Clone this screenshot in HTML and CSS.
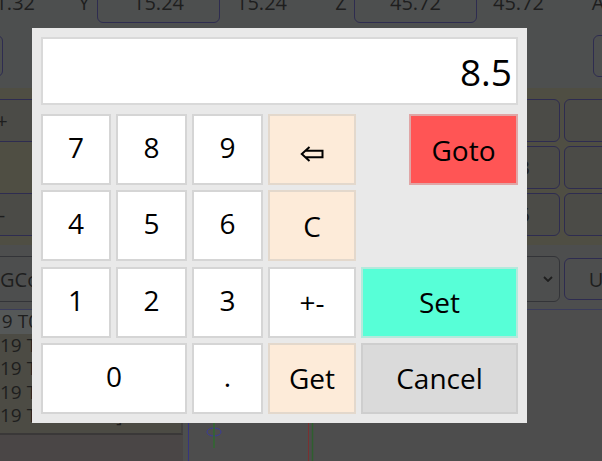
FILE: index.html
```html
<!DOCTYPE html>
<html lang="en">
<head>
<meta charset="utf-8">
<title>Keypad</title>
<link rel="stylesheet" href="styles.css">
</head>
<body>
<div class="app">
  <div class="axes">
    <span class="val lead">41.32</span>
    <span class="lbl">Y</span><span class="field">15.24</span><span class="val">15.24</span>
    <span class="lbl">Z</span><span class="field">45.72</span><span class="val">45.72</span>
    <span class="lbl">A</span>
  </div>
  <div class="row2">
    <span class="field edge-left"></span>
    <span class="field edge-right"></span>
  </div>
  <div class="jog">
    <div class="jog-left">
      <button class="jbtn">+</button>
      <span></span>
      <button class="jbtn">-</button>
    </div>
    <div class="jog-right">
      <button class="jbtn step">1</button><button class="jbtn"></button>
      <button class="jbtn step">3</button><button class="jbtn"></button>
      <button class="jbtn step">5</button><button class="jbtn"></button>
    </div>
  </div>
  <div class="toolbar">
    <div class="tsel tsel-left">GCode</div>
    <div class="tb-right">
      <div class="tsel tsel-right">
        <span>mm</span>
        <svg class="chev" width="10" height="6" viewBox="0 0 10 6"><path d="M1 1 L5 5 L9 1" fill="none" stroke="#1e1e1e" stroke-width="1.8"/></svg>
      </div>
      <button class="tbtn">Units</button>
    </div>
  </div>
  <div class="lower">
    <div class="listcol">
      <ul class="gcode">
        <li class="sel first">19 T0 [0 0 20]</li>
        <li>19 T0 [0 0 20]</li>
        <li>19 T0 [0 0 20]</li>
        <li>19 T0 [0 0 20]</li>
        <li>19 T0 : 0 0 20]</li>
      </ul>
      <div class="listfoot"></div>
    </div>
    <div class="view">
      <svg width="415" height="151" viewBox="0 0 415 151">
        <line x1="1.5" y1="0" x2="1.5" y2="151" stroke="#35357e" stroke-width="1"/>
        <line x1="121.5" y1="0" x2="121.5" y2="151" stroke="#7a3030" stroke-width="1"/>
        <line x1="125.5" y1="0" x2="125.5" y2="151" stroke="#2f5e2f" stroke-width="1.5"/>
        <ellipse cx="27" cy="122" rx="7" ry="4" fill="none" stroke="#3a3a9a" stroke-width="1"/>
        <line x1="27" y1="112" x2="27" y2="138" stroke="#2f6a2f" stroke-width="1.5"/>
      </svg>
    </div>
  </div>
</div>

<div class="keypad" role="dialog" aria-label="Numeric keypad">
  <div class="display">8.5</div>
  <div class="keys">
    <button class="key num">7</button>
    <button class="key num">8</button>
    <button class="key num">9</button>
    <button class="key act" aria-label="Backspace">
      <svg class="bksp" width="25" height="17" viewBox="0 0 25 17"><path d="M9.5 1 L1.8 8 L9.5 15 M5.3 4.8 H22.5 V11.2 H5.3" fill="none" stroke="#000" stroke-width="2" stroke-linejoin="miter"/></svg>
    </button>
    <button class="key goto">Goto</button>

    <button class="key num">4</button>
    <button class="key num">5</button>
    <button class="key num">6</button>
    <button class="key act">C</button>
    <div class="empty"></div>

    <button class="key num">1</button>
    <button class="key num">2</button>
    <button class="key num">3</button>
    <button class="key">+-</button>
    <button class="key set">Set</button>

    <button class="key num zero">0</button>
    <button class="key num">.</button>
    <button class="key act">Get</button>
    <button class="key cancel">Cancel</button>
  </div>
</div>
</body>
</html>
```
FILE: styles.css
```css
html, body {
  margin: 0;
  padding: 0;
}
body {
  width: 602px;
  height: 461px;
  overflow: hidden;
  background: #4d4f4f;
  font-family: "Open Sans", "Noto Sans", sans-serif;
  color: #1e1e1e;
}
button {
  font: inherit;
  color: inherit;
  margin: 0;
  padding: 0;
  cursor: pointer;
}

/* ---------- dimmed application behind the dialog ---------- */
.app {
  display: flex;
  flex-direction: column;
  width: 602px;
  height: 461px;
  overflow: hidden;
}
.axes {
  display: flex;
  align-items: center;
  height: 36px;
  margin: -13px 0 0 -37px;
  font-size: 20px;
  white-space: nowrap;
  flex: none;
}
.axes > span {
  box-sizing: border-box;
  height: 36px;
  display: flex;
  align-items: center;
  padding-bottom: 5px;
  flex: none;
}
.val {
  width: 108px;
  padding-left: 16px;
}
.val.lead {
  padding-left: 21px;
}
.lbl {
  width: 26px;
  justify-content: center;
}
.field {
  box-sizing: border-box;
  width: 123px;
  border: 1.5px solid #2e2c50;
  border-radius: 6px;
  justify-content: center;
}
.row2 {
  display: flex;
  justify-content: space-between;
  margin-top: 12px;
  height: 42px;
  flex: none;
}
.row2 .field {
  width: 60px;
  height: 42px;
}
.edge-left { margin-left: -57px; }
.edge-right { margin-right: -51px; }

.jog {
  display: flex;
  justify-content: space-between;
  margin-top: 11px;
  padding: 11px 0 9px;
  background: #4f4e43;
  flex: none;
}
.jog-left {
  display: grid;
  grid-template-rows: 43px 43px 43px;
  row-gap: 4px;
  width: 80px;
  margin-left: -38px;
}
.jog-right {
  display: grid;
  grid-template-columns: 76px 76px;
  grid-template-rows: 43px 43px 43px;
  gap: 4px;
  margin-right: -38px;
}
.jbtn {
  box-sizing: border-box;
  background: #4b4b47;
  border: 1.5px solid #2e2c50;
  border-radius: 6px;
  font-size: 20px;
  color: #1e1e1e;
}
.jbtn.step {
  display: flex;
  align-items: center;
  justify-content: flex-end;
  padding-right: 29px;
}
.toolbar {
  display: flex;
  justify-content: space-between;
  align-items: flex-start;
  height: 64px;
  border-bottom: 1px solid #3a3c5a;
  background: #4d4e4e;
  flex: none;
}
.tsel {
  box-sizing: border-box;
  height: 46px;
  margin-top: 11px;
  border: 1.5px solid #333438;
  border-radius: 6px;
  display: flex;
  align-items: center;
  font-size: 20px;
}
.tsel-left {
  width: 160px;
  margin-left: -9px;
  padding-left: 8px;
}
.tb-right {
  display: flex;
  gap: 4px;
  margin-right: -60px;
}
.tsel-right {
  width: 140px;
  justify-content: space-between;
  padding: 0 6px 0 12px;
}
.tbtn {
  box-sizing: border-box;
  width: 98px;
  height: 42px;
  margin-top: 13px;
  background: transparent;
  border: 1.5px solid #2e2c50;
  border-radius: 6px;
  font-size: 20px;
  text-align: center;
}
.lower {
  display: flex;
  flex: 1;
  min-height: 0;
}
.listcol {
  width: 183px;
  display: flex;
  flex-direction: column;
  flex: none;
}
.gcode {
  list-style: none;
  margin: 0;
  padding: 0;
  height: 125px;
  box-sizing: border-box;
  background: #4c4b44;
  border-bottom: 2px solid #3a3838;
  border-right: 2px solid #424040;
  font-size: 19px;
  overflow: hidden;
}
.gcode li {
  height: 23.5px;
  line-height: 23.5px;
  white-space: nowrap;
}
.gcode li.sel {
  background: #555858;
}
.gcode li.first {
  text-indent: -9px;
}
.listfoot {
  flex: 1;
  background: #4a4646;
}
.view {
  flex: 1;
  margin-left: 4px;
  background: #4d4d4d;
}
.view svg {
  display: block;
}

/* ---------- keypad dialog ---------- */
.keypad {
  position: fixed;
  left: 32px;
  top: 28px;
  width: 495px;
  box-sizing: border-box;
  padding: 9px;
  background: #e9e9e9;
  color: #000;
}
.display {
  box-sizing: border-box;
  height: 68px;
  margin-bottom: 9px;
  border: 2px solid #d9d9d9;
  background: #fff;
  display: flex;
  align-items: center;
  justify-content: flex-end;
  padding-right: 4px;
  font-size: 37px;
}
.keys {
  display: grid;
  grid-template-columns: 70px 71px 71px 88px 157px;
  grid-template-rows: repeat(4, 71px);
  column-gap: 5px;
  row-gap: 5.33px;
}
.key {
  box-sizing: border-box;
  display: flex;
  align-items: center;
  justify-content: center;
  background: #fff;
  border: 2px solid #d5d5d5;
  font-size: 28px;
  color: #000;
}
.key.num {
  padding-bottom: 5px;
}
.key.zero {
  grid-column: span 2;
}
.key.act {
  background: #fdebd9;
  border-color: #e3d8cc;
}
.bksp {
  margin-top: 9px;
}
.key.goto {
  justify-self: end;
  width: 109px;
  background: #ff5555;
  border-color: #e0a6a6;
}
.key.set {
  background: #57ffd7;
  border-color: #b4e9dc;
}
.key.cancel {
  background: #dadada;
  border-color: #cecece;
}
```
